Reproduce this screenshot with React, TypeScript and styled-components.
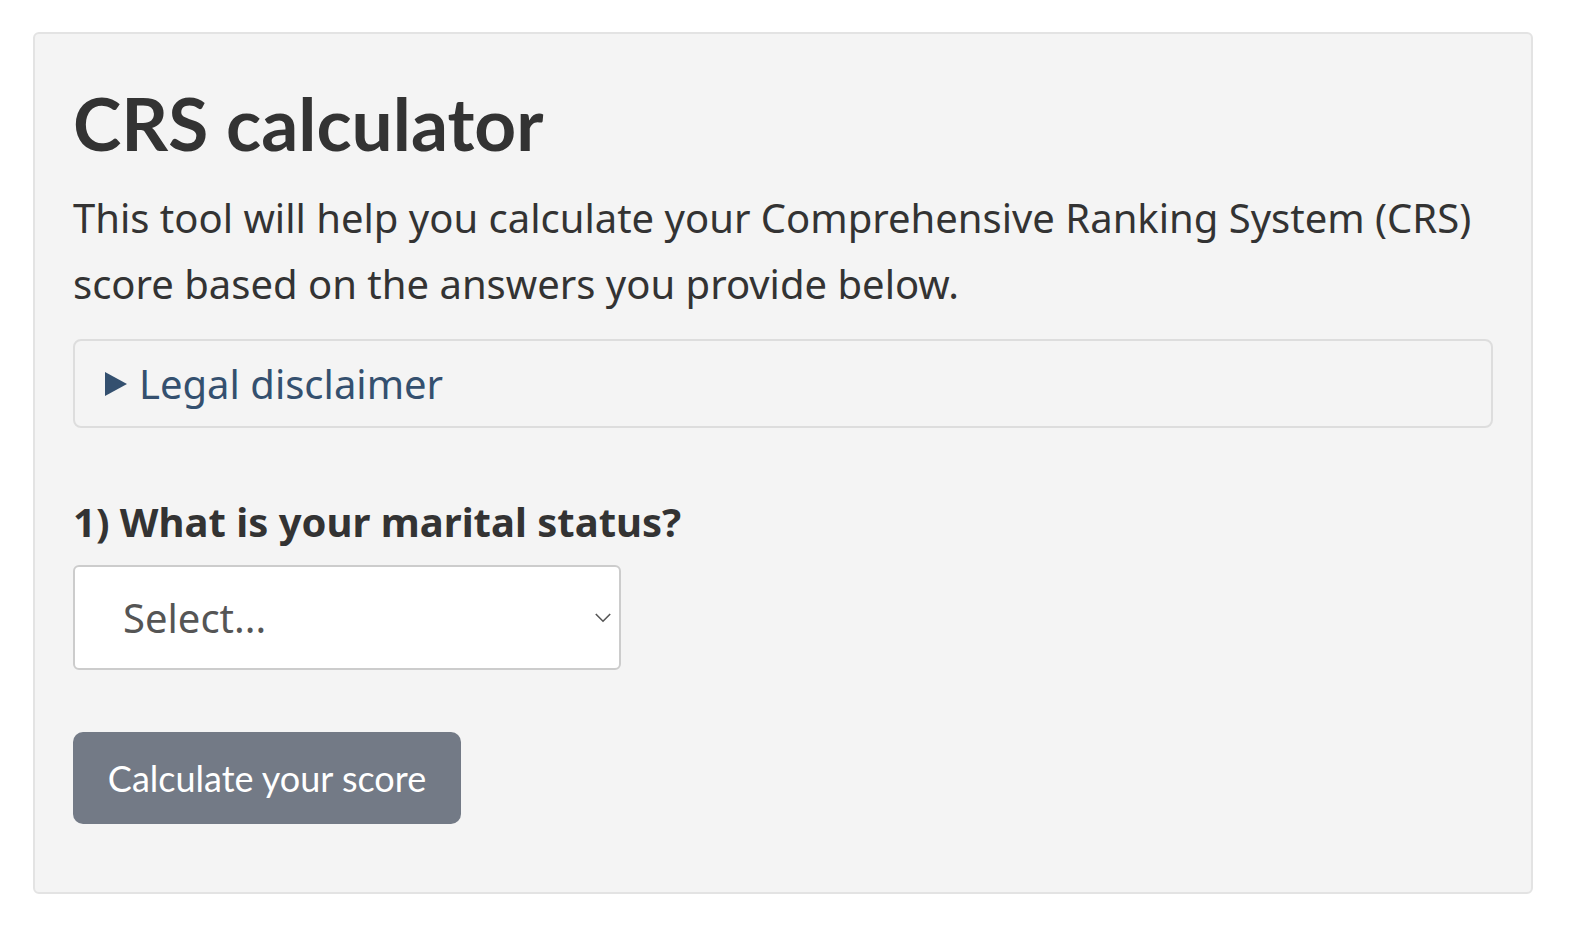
import styled, { createGlobalStyle } from 'styled-components'

const GlobalStyle = createGlobalStyle`
  body {
    margin: 0;
    background: #ffffff;
    font-family: 'Noto Sans', 'Open Sans', sans-serif;
    color: #333333;
  }
`

const App = () => {
  return (
    <Page>
      <GlobalStyle />
      <Card>
        <Title>CRS calculator</Title>
        <Intro>
          This tool will help you calculate your Comprehensive Ranking System
          (CRS) score based on the answers you provide below.
        </Intro>
        <Disclaimer>
          <Summary>
            <Caret viewBox='0 0 22 24'>
              <polygon points='0,0 22,12 0,24' fill='#34506f' />
            </Caret>
            Legal disclaimer
          </Summary>
        </Disclaimer>
        <Question>1) What is your marital status?</Question>
        <SelectBox>
          <span>Select...</span>
          <Chevron viewBox='0 0 20 12'>
            <polyline
              points='1,1 10,10 19,1'
              fill='none'
              stroke='#555'
              strokeWidth='2'
            />
          </Chevron>
        </SelectBox>
        <SubmitButton>Calculate your score</SubmitButton>
      </Card>
    </Page>
  )
}

export default App

const Page = styled.div`
  padding: 32px 37px 40px 33px;
`

const Card = styled.div`
  background: #f4f4f4;
  border: 2px solid #e3e3e3;
  border-radius: 6px;
  padding: 49px 38px 68px;
  display: flex;
  flex-direction: column;
  align-items: flex-start;
`

const Title = styled.h1`
  font-family: Lato, 'Noto Sans', sans-serif;
  font-weight: 700;
  font-size: 73px;
  line-height: 1.1;
  margin: 0 0 22px;
  color: #333333;
`

const Intro = styled.p`
  font-size: 40px;
  line-height: 66px;
  margin: 0 0 22px;
  color: #333333;
`

const Disclaimer = styled.div`
  align-self: stretch;
  height: 89px;
  box-sizing: border-box;
  border: 2px solid #dddddd;
  border-radius: 8px;
  display: flex;
  align-items: center;
  padding: 0 30px;
`

const Summary = styled.div`
  display: flex;
  align-items: center;
  gap: 12px;
  color: #34506f;
  font-size: 40px;
`

const Caret = styled.svg`
  width: 22px;
  height: 24px;
`

const Question = styled.div`
  font-weight: 700;
  font-size: 40px;
  margin: 66px 0 16px;
  color: #333333;
`

const SelectBox = styled.div`
  width: 548px;
  height: 105px;
  box-sizing: border-box;
  background: #ffffff;
  border: 2px solid #cccccc;
  border-radius: 6px;
  display: flex;
  align-items: center;
  justify-content: space-between;
  padding: 0 8px 0 48px;
  font-size: 40px;
  color: #555555;
`

const Chevron = styled.svg`
  width: 16px;
  height: 10px;
`

const SubmitButton = styled.button`
  margin-top: 62px;
  width: 388px;
  height: 92px;
  border: none;
  border-radius: 10px;
  background: #737a86;
  color: #ffffff;
  font-family: Lato, 'Noto Sans', sans-serif;
  font-size: 36px;
  cursor: pointer;
`
